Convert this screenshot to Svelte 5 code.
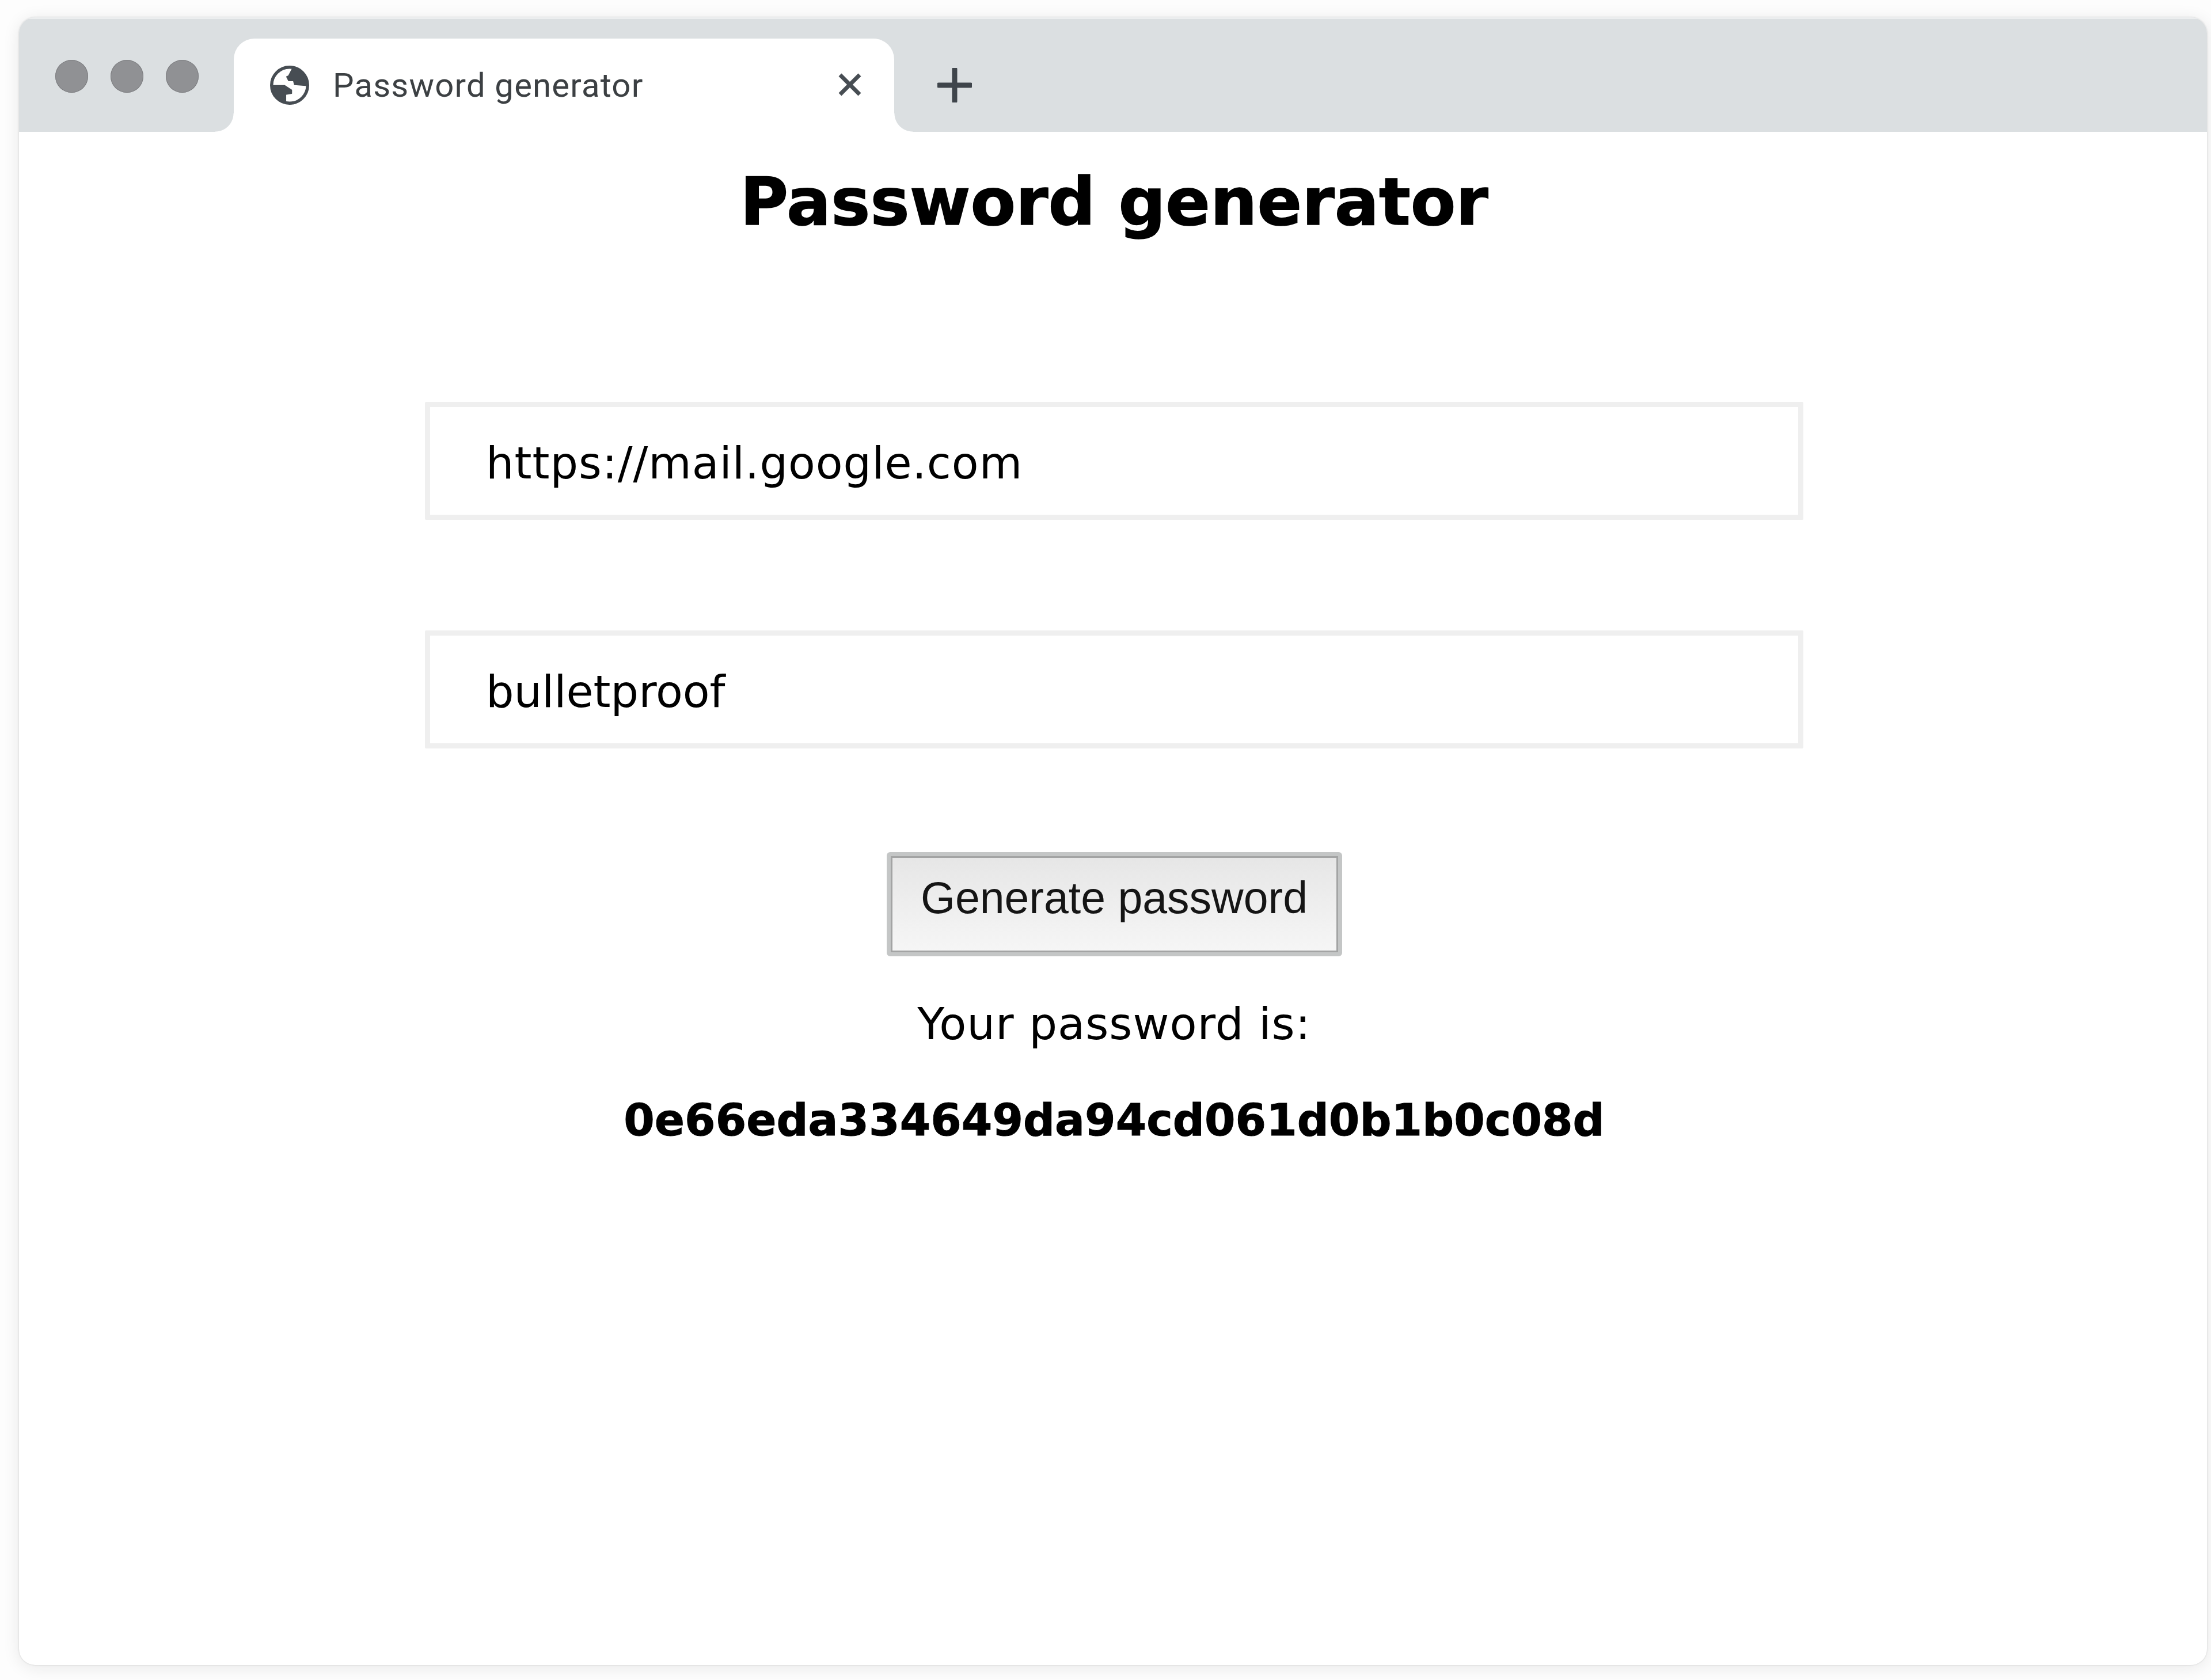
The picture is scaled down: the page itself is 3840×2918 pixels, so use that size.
<script>
  let site = "https://mail.google.com";
  let word = "bulletproof";
  let password = "0e66eda334649da94cd061d0b1b0c08d";
</script>

<div class="page">
  <div class="window">
    <div class="tabbar">
      <div class="lights">
        <span class="dot"></span>
        <span class="dot"></span>
        <span class="dot"></span>
      </div>
      <div class="tab">
        <svg class="globe" viewBox="0 0 200 200">
          <circle cx="100" cy="100" r="92" fill="#fff" stroke="#474d53" stroke-width="16" />
          <path
            fill="#474d53"
            stroke="#474d53"
            stroke-width="5"
            stroke-linejoin="round"
            d="M10 102H75L110 125V142L80 147V188A90 90 0 0 1 10 102ZM115 14L95 52L85 57L95 77H120L125 97L190 102A90 90 0 0 0 115 14Z"
          />
        </svg>
        <span class="tab-title">Password generator</span>
        <svg class="close" viewBox="0 0 40 40">
          <path d="M3 3L37 37M37 3L3 37" />
        </svg>
      </div>
      <svg class="plus" viewBox="0 0 60 60">
        <path d="M30 2V58M2 30H58" />
      </svg>
    </div>

    <div class="content">
      <h1>Password generator</h1>
      <input class="field first" value={site} />
      <input class="field" value={word} />
      <button>Generate password</button>
      <p class="label">Your password is:</p>
      <p class="password">{password}</p>
    </div>
  </div>
</div>

<style>
  :global(body) {
    margin: 0;
    background: #fff;
  }

  .page {
    height: 2918px;
    box-sizing: border-box;
    padding: 30px 7px 26px 33px;
    background: #fdfdfd;
  }

  .window {
    height: 100%;
    display: flex;
    flex-direction: column;
    background: #fff;
    border-radius: 28px;
    overflow: hidden;
    box-shadow: 0 4px 30px rgba(0, 0, 0, 0.09), 0 0 3px rgba(0, 0, 0, 0.16);
  }

  /* Tab strip */
  .tabbar {
    height: 199px;
    box-sizing: border-box;
    border-top: 3px solid #eceeef;
    display: flex;
    flex-shrink: 0;
    background: #dbdfe1;
  }
  .lights {
    width: 373px;
    height: 159px;
    flex-shrink: 0;
    box-sizing: border-box;
    padding: 71px 0 0 63px;
    display: flex;
    gap: 39px;
  }
  .dot {
    width: 57px;
    height: 57px;
    border-radius: 50%;
    background: #909194;
    box-shadow: inset 0 0 0 1px #7d7e81;
  }
  .tab {
    position: relative;
    width: 1147px;
    margin-top: 34px;
    flex-shrink: 0;
    display: flex;
    align-items: center;
    box-sizing: border-box;
    padding: 0 0 0 63px;
    background: #fff;
    border-radius: 36px 36px 0 0;
  }
  /* inverted bottom corners of the tab */
  .tab::before,
  .tab::after {
    content: "";
    position: absolute;
    bottom: 0;
    width: 32px;
    height: 32px;
  }
  .tab::before {
    left: -32px;
    background: radial-gradient(circle at 0 0, #dbdfe1 31px, #fff 32px);
  }
  .tab::after {
    right: -32px;
    background: radial-gradient(circle at 100% 0, #dbdfe1 31px, #fff 32px);
  }
  .globe {
    width: 68px;
    height: 68px;
    flex-shrink: 0;
  }
  .tab-title {
    margin-left: 41px;
    font-family: Roboto, "Liberation Sans", sans-serif;
    font-size: 58px;
    letter-spacing: 1.2px;
    color: #3c4043;
  }
  .close {
    position: absolute;
    right: 57px;
    top: 60px;
    width: 40px;
    height: 40px;
    fill: none;
    stroke: #474d53;
    stroke-width: 7;
  }
  .plus {
    width: 60px;
    height: 60px;
    margin: 85px 0 0 75px;
    fill: none;
    stroke: #3f454b;
    stroke-width: 9;
    stroke-linecap: round;
  }

  /* Page body */
  .content {
    flex: 1;
    display: flex;
    flex-direction: column;
    align-items: center;
    padding-left: 4px;
    font-family: "DejaVu Sans", Verdana, sans-serif;
    color: #000;
  }
  h1 {
    margin: 54px 0 0;
    font-size: 114.5px;
    line-height: 136px;
    font-weight: 700;
    -webkit-text-stroke: 1.5px #000;
  }
  .field {
    width: 2394px;
    height: 205px;
    box-sizing: border-box;
    padding: 8px 97px 0;
    border: 9px solid #efefef;
    border-radius: 2px;
    background: #fff;
    outline: none;
    font-family: inherit;
    font-size: 76.5px;
    color: #000;
  }
  .first {
    margin-top: 279px;
    letter-spacing: 1px;
  }
  .field + .field {
    margin-top: 192px;
  }
  button {
    width: 791px;
    height: 181px;
    margin-top: 180px;
    padding: 0 0 22px;
    box-sizing: border-box;
    border: 7px solid #c4c6c6;
    border-radius: 6px;
    box-shadow: inset 0 0 0 3px #a3a4a4;
    background: linear-gradient(#e6e6e6, #f6f6f6);
    font-family: "Liberation Sans", Arial, sans-serif;
    font-size: 77px;
    color: #151515;
  }
  p {
    margin: 0;
    font-size: 77px;
    line-height: 97px;
  }
  .label {
    margin-top: 69px;
    letter-spacing: 1px;
  }
  .password {
    margin-top: 70px;
    font-weight: 700;
    -webkit-text-stroke: 1px #000;
  }
</style>
